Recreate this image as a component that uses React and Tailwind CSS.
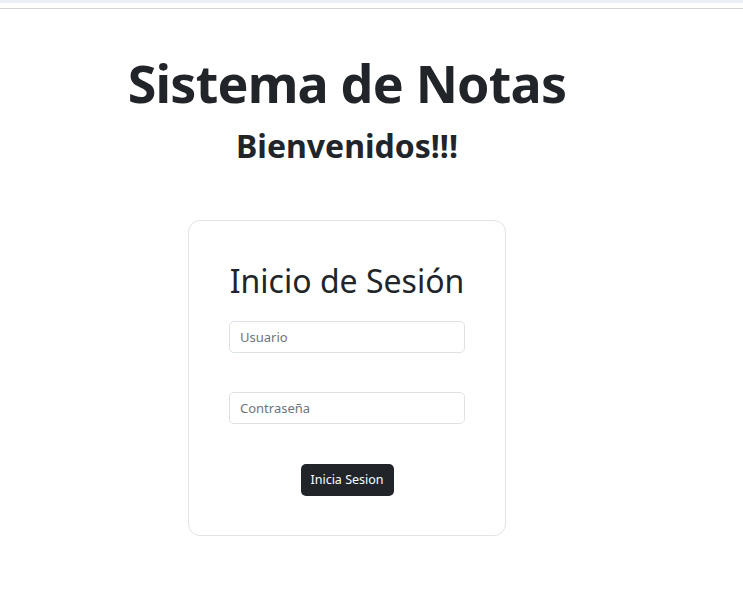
import React from "react";

export default function App() {
  return (
    <div className="min-h-[594px] bg-white text-[#212529]" style={{ fontFamily: '"Noto Sans", "Open Sans", sans-serif' }}>
      <div className="h-[3px] bg-[#eaeff6]" />
      <div className="h-[5px] bg-white" />
      <div className="h-px bg-[#d4d4d4]" />
      <div className="w-[694px] flex flex-col items-center">
        <h1 className="mt-[43px] text-[52px] leading-[1.2] font-bold tracking-[-0.8px]">Sistema de Notas</h1>
        <h2 className="mt-[13px] text-[32px] leading-[1.2] font-bold">Bienvenidos!!!</h2>
        <div className="mt-[54px] w-[318px] h-[316px] border border-[#e3e3e3] rounded-[12px] flex flex-col items-center">
          <h3 className="mt-[41px] text-[32px] leading-[1.2] font-normal">Inicio de Sesión</h3>
          <input
            placeholder="Usuario"
            className="mt-[21px] w-[236px] h-[32px] border border-[#dee2e6] rounded-[5px] px-[10px] text-[13px] placeholder:text-[#6c757d] outline-none"
          />
          <input
            placeholder="Contraseña"
            type="password"
            className="mt-[39px] w-[236px] h-[32px] border border-[#dee2e6] rounded-[5px] px-[10px] text-[13px] placeholder:text-[#6c757d] outline-none"
          />
          <button className="mt-[40px] w-[93px] h-[32px] bg-[#212529] text-white text-[12.5px] rounded-[5px]">Inicia Sesion</button>
        </div>
      </div>
    </div>
  );
}
